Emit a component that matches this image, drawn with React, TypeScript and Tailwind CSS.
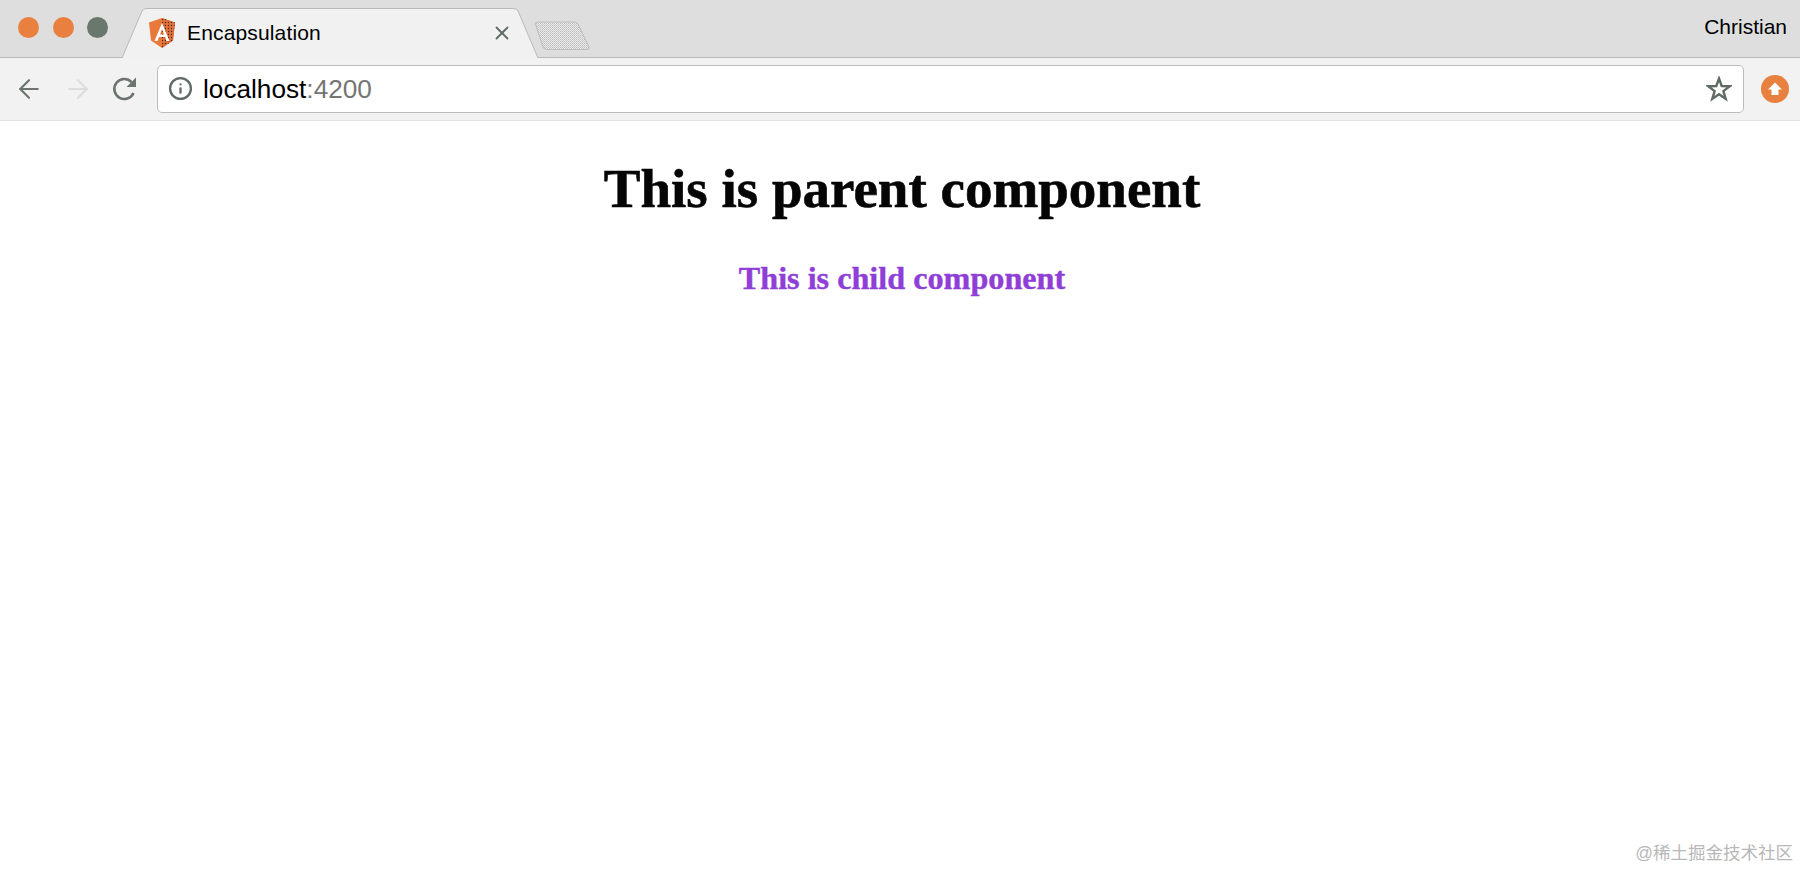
import { ArrowLeft, ArrowRight, Info, X } from 'lucide-react';

function AngularLogo() {
  return (
    <svg width="26" height="30" viewBox="0 0 26 30" className="shrink-0">
      <defs>
        <pattern id="logoDots" width="3" height="3" patternUnits="userSpaceOnUse">
          <rect width="3" height="3" fill="#e0703a" />
          <circle cx="1.500" cy="1.500" r="0.700" fill="#4a2a16" />
        </pattern>
      </defs>
      <path d="M13 0 L26 4.600 L24 22.600 L13 30 L2 22.600 L0 4.600 Z" fill="#e8793a" />
      <path d="M13 0 L26 4.600 L24 22.600 L13 30 Z" fill="url(#logoDots)" />
      <path d="M13 5 L5.500 23 H8.500 L10 19 H16 L17.500 23 H20.500 Z M11 16.500 L13 11 L15 16.500 Z" fill="#fff" fillRule="evenodd" />
    </svg>
  );
}

function TabShape() {
  return (
    <svg width="416" height="50" viewBox="0 0 416 50" className="absolute left-0 top-0">
      <path d="M0 50 L20 3 Q21 0.500 25 0.500 H391 Q395 0.500 396 3 L416 50" fill="#f1f1f1" stroke="#b9b9b9" strokeWidth="1" />
    </svg>
  );
}

function NewTabButton() {
  return (
    <svg width="56" height="30" viewBox="0 0 56 30" className="ml-[-4px] mt-[21px] shrink-0">
      <defs>
        <pattern id="dither" width="2" height="2" patternUnits="userSpaceOnUse">
          <rect width="2" height="2" fill="#ececec" />
          <rect width="1" height="1" fill="#bcbcbc" />
          <rect x="1" y="1" width="1" height="1" fill="#c8c8c8" />
        </pattern>
      </defs>
      <path d="M1.500 3 Q1 1 4 1 H40 Q43 1 44 3 L55 26 Q56 28.500 53 28.500 H13 Q10 28.500 9 26 Z" fill="url(#dither)" stroke="#bdbdbd" strokeWidth="1" />
    </svg>
  );
}

function ReloadIcon() {
  return (
    <svg width="28" height="28" viewBox="0 0 28 28" className="ml-[18px] shrink-0">
      <path d="M22.500 18 A10 10 0 1 1 20.500 7" fill="none" stroke="#6b746f" strokeWidth="2.600" />
      <path d="M25 2.500 V12 H15.500 Z" fill="#6b746f" />
    </svg>
  );
}

function StarIcon() {
  return (
    <svg width="26" height="26" viewBox="0 0 26 26" className="ml-auto shrink-0">
      <path d="M13 2.500 L15.700 10 L23.800 10.200 L17.400 15.100 L19.700 22.900 L13 18.300 L6.300 22.900 L8.600 15.100 L2.200 10.200 L10.300 10 Z" fill="none" stroke="#5f6b64" strokeWidth="2.400" strokeLinejoin="miter" />
    </svg>
  );
}

export default function App() {
  return (
    <div className="min-h-[869px] bg-white flex flex-col font-['Liberation_Sans',Arial,sans-serif]">
      {/* Tab strip */}
      <div className="h-[58px] bg-[#dedede] border-b border-[#b9b9b9] flex items-start">
        <div className="flex items-center gap-[13.500px] pl-[18px] pt-[17px] w-[122px] shrink-0">
          <span className="w-[21px] h-[21px] rounded-full bg-[#ea803f] shrink-0" />
          <span className="w-[21px] h-[21px] rounded-full bg-[#ea803f] shrink-0" />
          <span className="w-[21px] h-[21px] rounded-full bg-[#69776c] shrink-0" />
        </div>
        <div className="relative w-[416px] h-[50px] mt-[8px] z-10 shrink-0">
          <TabShape />
          <div className="relative flex items-center h-[50px] pl-[27px] pr-[25px]">
            <AngularLogo />
            <span className="ml-[12px] text-[21px] tracking-[0.15px] text-black flex-1">Encapsulation</span>
            <X size={22} strokeWidth={2} className="text-[#5f6b64]" />
          </div>
        </div>
        <NewTabButton />
        <span className="ml-auto mr-[13px] mt-[14px] text-[21px] leading-[26px] text-black">Christian</span>
      </div>

      {/* Toolbar */}
      <div className="h-[63px] bg-[#f2f2f2] border-b border-[#e2e2e2] flex items-center pl-[14px] pr-[11px]">
        <ArrowLeft size={30} strokeWidth={1.7} className="text-[#6b746f] shrink-0" />
        <ArrowRight size={30} strokeWidth={1.7} className="ml-[19px] text-[#dcdcdc] shrink-0" />
        <ReloadIcon />
        <div className="ml-[18px] flex-1 h-[48px] bg-white border border-[#bcbcbc] rounded-[5px] flex items-center pl-[10px] pr-[11px] mb-[1px]">
          <Info size={25} strokeWidth={2.2} className="text-[#5f6b64] shrink-0" />
          <span className="ml-[10px] pt-[2px] text-[26.200px] text-black">localhost<span className="text-[#757575]">:4200</span></span>
          <StarIcon />
        </div>
        <div className="ml-[17px] w-[28px] h-[28px] rounded-full bg-[#e8803f] flex items-center justify-center shrink-0">
          <svg width="16" height="16" viewBox="0 0 16 16">
            <path d="M8 1.500 L15 8.500 H11.500 V14 H4.500 V8.500 H1 Z" fill="#fff" />
          </svg>
        </div>
      </div>

      {/* Page */}
      <div className="flex-1 flex flex-col items-center pl-[4px] pt-[36px] font-['Liberation_Serif','Times_New_Roman',serif] font-bold">
        <h1 className="text-[55px] leading-[64px] text-[#050505] [-webkit-text-stroke:0.6px_#050505]">This is parent component</h1>
        <h2 className="mt-[39px] text-[32.200px] leading-[36px] text-[#8f3fd8] [-webkit-text-stroke:0.4px_#8f3fd8]">This is child component</h2>
      </div>

      <div className="flex justify-end pr-[7px] pb-[5px] text-[17.500px] leading-[22px] text-[#b8b8b8] font-['Liberation_Sans','Noto_Sans_CJK_SC',sans-serif]">
        @稀土掘金技术社区
      </div>
    </div>
  );
}
